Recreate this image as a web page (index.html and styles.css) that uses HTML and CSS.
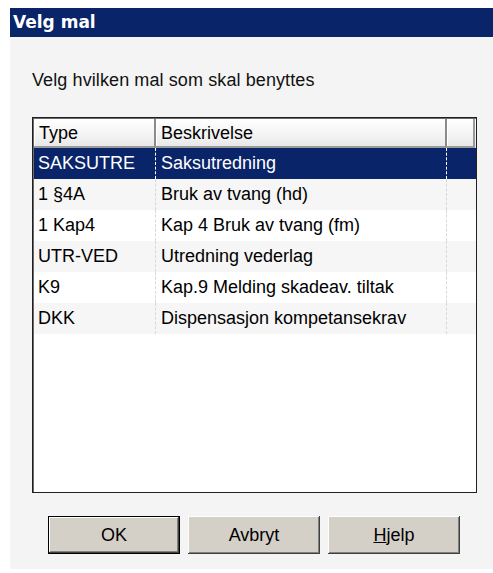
FILE: index.html
```html
<!DOCTYPE html>
<html lang="no">
<head>
<meta charset="utf-8">
<title>Velg mal</title>
<link rel="stylesheet" href="styles.css">
</head>
<body>
<div class="window">
  <div class="titlebar">Velg mal</div>
  <div class="content">
    <p class="prompt">Velg hvilken mal som skal benyttes</p>
    <div class="listbox">
      <div class="row header">
        <div class="cell c-type">Type</div>
        <div class="cell c-desc">Beskrivelse</div>
        <div class="cell c-pad"></div>
      </div>
      <div class="row selected">
        <div class="cell c-type">SAKSUTRE</div>
        <div class="cell c-desc">Saksutredning</div>
        <div class="cell c-pad"></div>
      </div>
      <div class="row alt">
        <div class="cell c-type">1 §4A</div>
        <div class="cell c-desc">Bruk av tvang (hd)</div>
        <div class="cell c-pad"></div>
      </div>
      <div class="row">
        <div class="cell c-type">1 Kap4</div>
        <div class="cell c-desc">Kap 4 Bruk av tvang (fm)</div>
        <div class="cell c-pad"></div>
      </div>
      <div class="row alt">
        <div class="cell c-type">UTR-VED</div>
        <div class="cell c-desc">Utredning vederlag</div>
        <div class="cell c-pad"></div>
      </div>
      <div class="row">
        <div class="cell c-type">K9</div>
        <div class="cell c-desc">Kap.9 Melding skadeav. tiltak</div>
        <div class="cell c-pad"></div>
      </div>
      <div class="row alt">
        <div class="cell c-type">DKK</div>
        <div class="cell c-desc">Dispensasjon kompetansekrav</div>
        <div class="cell c-pad"></div>
      </div>
    </div>
    <div class="buttons">
      <button class="btn default">OK</button>
      <button class="btn">Avbryt</button>
      <button class="btn"><u>H</u>jelp</button>
    </div>
  </div>
</div>
</body>
</html>
```
FILE: styles.css
```css
html, body {
  margin: 0;
  padding: 0;
  background: #ffffff;
}

body {
  font-family: "Liberation Sans", "DejaVu Sans", sans-serif;
  font-size: 18px;
  color: #000;
}

.window {
  margin: 8px 0 0 10px;
  height: 561px;
  background: #f4f4f4;
  display: flex;
  flex-direction: column;
}

.titlebar {
  height: 29px;
  line-height: 29px;
  background: #0a246a;
  color: #fff;
  font-family: "DejaVu Sans", sans-serif;
  font-weight: bold;
  font-size: 17px;
  padding-left: 3px;
}

.content {
  padding: 0 0 0 22px;
  display: flex;
  flex-direction: column;
}

.prompt {
  margin: 33px 0 0 0;
  height: 20px;
  line-height: 20px;
  color: #111;
  letter-spacing: 0.1px;
}

.listbox {
  margin-top: 27px;
  width: 442px;
  height: 373px;
  border: 1px solid #202020;
  box-shadow: inset 1px 1px 0 #6a6a6a;
  background: #fff;
  display: flex;
  flex-direction: column;
  padding: 1px 0 0 1px;
  box-sizing: content-box;
}

.row {
  display: flex;
  height: 31px;
  line-height: 31px;
  background: #fff;
}

.row.alt {
  background: #f6f6f6;
}

.cell {
  box-sizing: border-box;
  white-space: nowrap;
  overflow: hidden;
}

.c-type {
  width: 122px;
  padding-left: 4px;
  border-right: 1px dashed #d8d8d8;
}

.c-desc {
  width: 291px;
  padding-left: 5px;
  border-right: 1px dashed #d8d8d8;
}

.c-pad {
  flex: 1;
}

.row.header {
  height: 29px;
  line-height: 29px;
  background: linear-gradient(#ffffff, #f2f2f2 60%, #e6e6e6);
}

.row.header .cell {
  border-right: 2px solid #8a8a8a;
  border-bottom: 2px solid #9a9a9a;
  box-shadow: inset 1px 1px 0 #fff;
}

.row.header .c-type {
  padding-left: 5px;
}

.row.header .c-pad {
  flex: none;
  width: 28px;
  border-right-color: #9a9a9a;
}

.row.selected {
  background: #0a246a;
  color: #fff;
}

.row.selected .c-type,
.row.selected .c-desc {
  border-right: 1px dashed #ffffff;
}

.buttons {
  display: flex;
  gap: 8px;
  margin: 23px 0 0 16px;
}

.btn {
  width: 132px;
  height: 38px;
  font: inherit;
  font-size: 18px;
  color: #000;
  background: #d4d0c8;
  border: none;
  box-shadow: inset -1px -1px 0 #404040, inset 1px 1px 0 #ffffff, inset -2px -2px 0 #808080;
  padding: 0;
  margin: 0;
}

.btn.default {
  border: 1px solid #000;
}

.btn u {
  text-decoration: underline;
}
```
